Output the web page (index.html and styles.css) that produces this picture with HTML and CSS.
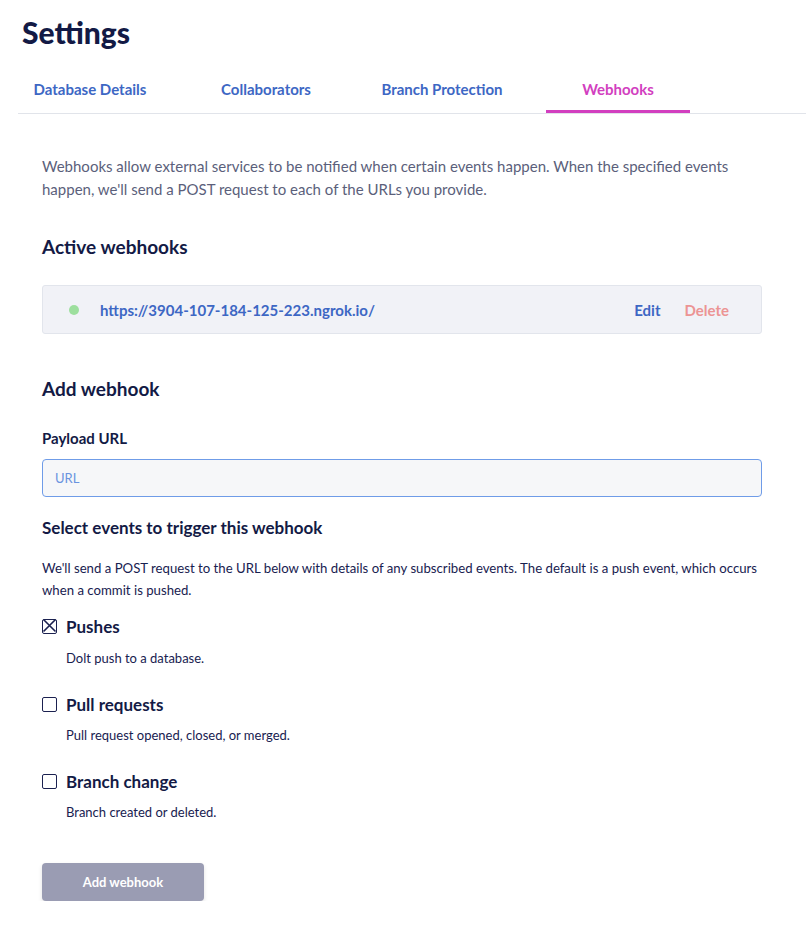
FILE: index.html
```html
<!DOCTYPE html>
<html>
<head>
<meta charset="utf-8">
<link rel="stylesheet" href="styles.css">
</head>
<body>
<div class="page">
  <h1 class="title">Settings</h1>
  <nav class="tabs">
    <div class="tab">Database Details</div>
    <div class="tab">Collaborators</div>
    <div class="tab">Branch Protection</div>
    <div class="tab active">Webhooks</div>
  </nav>
  <div class="content">
    <p class="intro">Webhooks allow external services to be notified when certain events happen. When the specified events happen, we'll send a POST request to each of the URLs you provide.</p>
    <h2 class="section-title active-title">Active webhooks</h2>
    <div class="hook-row">
      <span class="dot"></span>
      <span class="hook-url">https://3904-107-184-125-223.ngrok.io/</span>
      <span class="hook-edit">Edit</span>
      <span class="hook-delete">Delete</span>
    </div>
    <h2 class="section-title add-title">Add webhook</h2>
    <label class="field-label">Payload URL</label>
    <div class="input"><span class="placeholder">URL</span></div>
    <h3 class="events-title">Select events to trigger this webhook</h3>
    <p class="events-desc">We'll send a POST request to the URL below with details of any subscribed events. The default is a push event, which occurs when a commit is pushed.</p>
    <div class="event">
      <div class="event-head">
        <span class="box checked"><svg viewBox="0 0 15 15" width="15" height="15"><path d="M1.5 1.5 L13.5 13.5 M13.5 1.5 L1.5 13.5" stroke="#1b2150" stroke-width="1.6" fill="none"/></svg></span>
        <span class="event-name">Pushes</span>
      </div>
      <div class="event-desc">Dolt push to a database.</div>
    </div>
    <div class="event">
      <div class="event-head">
        <span class="box"></span>
        <span class="event-name">Pull requests</span>
      </div>
      <div class="event-desc">Pull request opened, closed, or merged.</div>
    </div>
    <div class="event">
      <div class="event-head">
        <span class="box"></span>
        <span class="event-name">Branch change</span>
      </div>
      <div class="event-desc">Branch created or deleted.</div>
    </div>
    <button class="submit">Add webhook</button>
  </div>
</div>
</body>
</html>
```
FILE: styles.css
```css
* { box-sizing: border-box; }
body {
  margin: 0;
  font-family: "Lato", "Open Sans", sans-serif;
  color: #182150;
  background: #fff;
}
.page { padding: 14px 0 0 18px; }
.title {
  margin: 0 0 0 4px;
  font-size: 30px;
  font-weight: 900;
  line-height: 36px;
  color: #131a45;
}
.tabs {
  display: flex;
  gap: 32px;
  margin-top: 24px;
  border-bottom: 1px solid #e1e4ea;
}
.tab {
  width: 144px;
  text-align: center;
  font-size: 15px;
  font-weight: 700;
  color: #3d67c4;
  padding: 6px 0 12px;
  line-height: 18px;
  border-bottom: 3px solid transparent;
}
.tab.active { color: #d23fbf; border-bottom-color: #d23fbf; }
.content { padding: 0 44px 0 24px; }
.intro {
  margin: 41px 0 0;
  font-size: 15px;
  line-height: 23px;
  color: #5b5f7b;
}
.section-title {
  margin: 0;
  font-size: 19px;
  font-weight: 700;
  line-height: 24px;
  color: #131a45;
}
.active-title { margin-top: 34px; }
.hook-row {
  margin-top: 26px;
  height: 49px;
  display: flex;
  align-items: center;
  background: #f1f2f7;
  border: 1px solid #e2e5ec;
  border-radius: 3px;
  padding: 0 32px 0 26px;
  font-size: 15px;
  font-weight: 700;
}
.dot {
  width: 10px; height: 10px;
  border-radius: 50%;
  background: #9ddf9e;
  margin-right: 21px;
}
.hook-url { color: #3d67c4; flex: 1; }
.hook-edit { color: #3d67c4; margin-right: 24px; }
.hook-delete { color: #ec9494; }
.add-title { margin-top: 43px; }
.field-label {
  display: block;
  margin-top: 27px;
  font-size: 15px;
  font-weight: 700;
  line-height: 20px;
  color: #131a45;
}
.input {
  margin-top: 11px;
  height: 38px;
  border: 1px solid #6f9ce8;
  border-radius: 4px;
  background: #f6f7f9;
  display: flex;
  align-items: center;
  padding-left: 12px;
}
.placeholder { font-size: 13px; color: #6a93df; }
.events-title {
  margin: 20px 0 0;
  font-size: 17px;
  font-weight: 700;
  line-height: 22px;
  color: #131a45;
}
.events-desc {
  margin: 18px 0 0;
  font-size: 13.2px;
  line-height: 22px;
  color: #182150;
}
.event { margin-top: 14px; }
.event + .event { margin-top: 26px; }
.event-head { display: flex; align-items: center; gap: 9px; height: 22px; }
.box {
  width: 15px; height: 15px;
  border: 1.5px solid #1b2150;
  border-radius: 2px;
  display: inline-flex;
  position: relative;
}
.box svg { position: absolute; left: -1.5px; top: -1.5px; }
.event-name { font-size: 17px; font-weight: 700; color: #131a45; }
.event-desc {
  margin: 12px 0 0 24px;
  font-size: 13px;
  line-height: 18px;
  color: #182150;
}
.event + .event .event-desc { margin-top: 11px; }
.submit {
  margin-top: 42px;
  width: 162px;
  height: 38px;
  border: none;
  border-radius: 4px;
  background: #9a9cb3;
  color: #fff;
  font-family: inherit;
  font-size: 13px;
  font-weight: 700;
  box-shadow: 0 2px 4px rgba(0,0,0,0.12);
}
```
